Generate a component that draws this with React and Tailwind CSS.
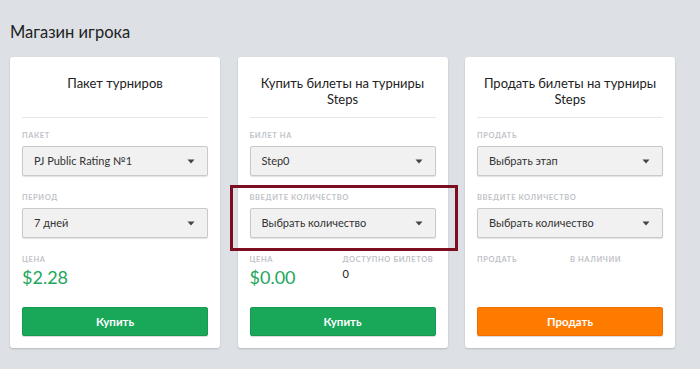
import React from 'react';

function Caret() {
    return (
        <svg width="8" height="5" viewBox="0 0 8 5" className="shrink-0">
            <path d="M0.5 0.5 L7.5 0.5 L4 4.5 Z" fill="#444" />
        </svg>
    );
}

function Label({ children }) {
    return <div className="text-[7.5px] leading-[10px] font-bold tracking-[0.6px] text-[#bfc3c8] uppercase whitespace-nowrap">{children}</div>;
}

function Select({ value }) {
    return (
        <div className="mt-[5px] h-[30px] flex items-center justify-between pl-[11px] pr-[12px] bg-[#f1f1f1] border border-[#c9c9c9] rounded-[2px] shadow-[0_1px_1px_rgba(0,0,0,0.12)] text-[11px] text-[#333]">
            <span>{value}</span>
            <Caret />
        </div>
    );
}

function Field({ label, value, className = '' }) {
    return (
        <div className={className}>
            <Label>{label}</Label>
            <Select value={value} />
        </div>
    );
}

function Card({ title, children }) {
    return (
        <div className="bg-white rounded-[3px] shadow-[0_1px_2px_rgba(0,0,0,0.18)] px-[12px] pb-[12px] flex flex-col">
            <div className="h-[60px] pt-[18px] text-center text-[13px] leading-[16px] text-[#222] whitespace-nowrap">{title}</div>
            <div className="h-px bg-[#e6e6e6]" />
            {children}
        </div>
    );
}

function Button({ color, children }) {
    return (
        <button className={`mt-auto h-[29px] w-full rounded-[2px] text-white text-[11.5px] font-bold shadow-[0_1px_1px_rgba(0,0,0,0.15)] ${color}`}>
            {children}
        </button>
    );
}

export default function App() {
    return (
        <div className="min-h-[369px] bg-[#dde1e5] px-[10px] pt-[20px] font-['Lato','Open_Sans',sans-serif]">
            <h1 className="text-[16.5px] leading-[24px] text-[#222]">Магазин игрока</h1>
            <div className="mt-[13px] w-[665px] grid grid-cols-3 gap-[17.5px]">
                <Card title="Пакет турниров">
                    <Field className="mt-[13px]" label="Пакет" value="PJ Public Rating №1" />
                    <Field className="mt-[17px]" label="Период" value="7 дней" />
                    <div className="mt-[17px] h-[42px]">
                        <Label>Цена</Label>
                        <div className="text-[18px] leading-[24px] text-[#1ea65e]">$2.28</div>
                    </div>
                    <div className="mt-[10px]" />
                    <Button color="bg-[#19a85a] border border-[#159a50]">Купить</Button>
                </Card>

                <Card title={<>Купить билеты на турниры<br />Steps</>}>
                    <Field className="mt-[13px]" label="Билет на" value="Step0" />
                    <div className="relative mt-[17px]">
                        <Field label="Введите количество" value="Выбрать количество" />
                        <div className="absolute -left-[20px] -right-[22px] -top-[8px] -bottom-[13px] border-[3px] border-[#7b0f1f]" />
                    </div>
                    <div className="mt-[17px] h-[42px] grid grid-cols-2">
                        <div>
                            <Label>Цена</Label>
                            <div className="text-[18px] leading-[24px] text-[#1ea65e]">$0.00</div>
                        </div>
                        <div>
                            <Label>Доступно билетов</Label>
                            <div className="mt-[2px] text-[11px] leading-[14px] text-[#222]">0</div>
                        </div>
                    </div>
                    <div className="mt-[10px]" />
                    <Button color="bg-[#19a85a] border border-[#159a50]">Купить</Button>
                </Card>

                <Card title={<>Продать билеты на турниры<br />Steps</>}>
                    <Field className="mt-[13px]" label="Продать" value="Выбрать этап" />
                    <Field className="mt-[17px]" label="Введите количество" value="Выбрать количество" />
                    <div className="mt-[17px] h-[42px] grid grid-cols-2">
                        <Label>Продать</Label>
                        <Label>В наличии</Label>
                    </div>
                    <div className="mt-[10px]" />
                    <Button color="bg-[#ff7b00] border border-[#f07000]">Продать</Button>
                </Card>
            </div>
        </div>
    );
}
